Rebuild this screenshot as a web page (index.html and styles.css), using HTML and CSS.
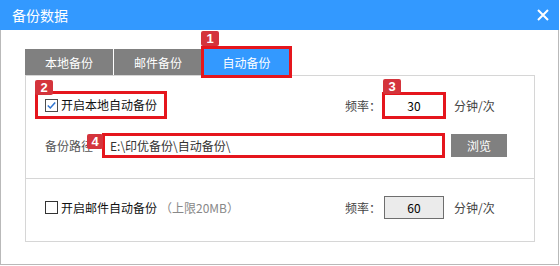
FILE: index.html
```html
<!DOCTYPE html>
<html lang="zh-CN">
<head>
    <meta charset="UTF-8">
    <title>备份数据</title>
    <link rel="stylesheet" href="styles.css">
</head>
<body>
    <div class="window">
        <div class="titlebar">
            <span class="title">备份数据</span>
            <svg class="close" width="12" height="12" viewBox="0 0 12 12">
                <path d="M1 1 L11 11 M11 1 L1 11" stroke="#fff" stroke-width="2"/>
            </svg>
        </div>
        <div class="content">
            <div class="tabs">
                <div class="tab">本地备份</div>
                <div class="tab">邮件备份</div>
                <div class="tab tab-active">自动备份<span class="badge badge-1">1</span></div>
            </div>
            <div class="panel">
                <div class="section section-local">
                    <div class="row row-top">
                        <label class="check mark">
                            <svg width="13" height="13" viewBox="0 0 13 13">
                                <rect x="0.5" y="0.5" width="12" height="12" fill="#fff" stroke="#4d4d4d"/>
                                <path d="M2.8 6.4 L5.3 9 L10.2 3.4" fill="none" stroke="#2f74d0" stroke-width="1.5"/>
                            </svg>
                            开启本地自动备份
                            <span class="badge badge-2">2</span>
                        </label>
                        <div class="freq">
                            <span class="freq-label">频率：</span>
                            <span class="mark mark-freq">
                                <input class="freq-input" type="text" value="30" readonly>
                                <span class="badge badge-3">3</span>
                            </span>
                            <span class="freq-unit">分钟/次</span>
                        </div>
                    </div>
                    <div class="row row-path">
                        <span class="path-label">备份路径</span>
                        <span class="mark mark-path">
                            <input class="path-input" type="text" value="E:\印优备份\自动备份\" readonly>
                            <span class="badge badge-4">4</span>
                        </span>
                        <button class="browse">浏览</button>
                    </div>
                </div>
                <div class="section section-mail">
                    <div class="row row-mail">
                        <label class="check">
                            <svg width="13" height="13" viewBox="0 0 13 13">
                                <rect x="0.5" y="0.5" width="12" height="12" fill="#fff" stroke="#333"/>
                            </svg>
                            开启邮件自动备份<span class="note">（上限20MB）</span>
                        </label>
                        <div class="freq">
                            <span class="freq-label">频率：</span>
                            <input class="freq-input freq-plain" type="text" value="60" readonly>
                            <span class="freq-unit freq-unit-plain">分钟/次</span>
                        </div>
                    </div>
                </div>
            </div>
        </div>
    </div>
</body>
</html>
```

FILE: styles.css
```css
* {
    box-sizing: border-box;
}
body {
    margin: 0;
    background: #fff;
    font-family: "Noto Sans CJK SC", "Noto Sans", sans-serif;
    font-size: 12px;
    color: #333;
}
.window {
    width: 559px;
    height: 265px;
    border: 1px solid #b9b9b9;
    border-top: none;
}
.titlebar {
    height: 30px;
    margin: 0 -1px;
    padding: 0 10px 0 12px;
    background: #3399ff;
    display: flex;
    align-items: center;
    justify-content: space-between;
}
.title {
    color: #fff;
    font-size: 14px;
    line-height: 16px;
}
.content {
    padding: 19px 0 0 24px;
}
.tabs {
    display: flex;
    height: 26px;
}
.tab {
    width: 88px;
    margin-right: 1px;
    background: #808080;
    color: #fff;
    display: flex;
    align-items: center;
    justify-content: center;
}
.tab-active {
    position: relative;
    width: 85px;
    margin-left: 1px;
    background: #3399ff;
    outline: 3px solid #e5161d;
}
.badge {
    position: absolute;
    width: 18px;
    height: 15px;
    background: #d4343c;
    color: #fff;
    border-radius: 2px;
    font-family: "Liberation Sans", sans-serif;
    font-weight: bold;
    font-size: 13px;
    line-height: 15px;
    text-align: center;
    z-index: 2;
}
.badge-1 {
    left: -3px;
    top: -18px;
}
.badge-2 {
    left: -3px;
    top: -14px;
}
.badge-3 {
    left: -2px;
    top: -16px;
}
.badge-4 {
    width: 16px;
    left: -18px;
    top: -2px;
}
.panel {
    width: 510px;
    border: 1px solid #d6d6d6;
}
.section {
    padding: 0 26px 0 9px;
}
.section-local {
    padding-top: 15px;
    padding-bottom: 20px;
    border-bottom: 1px solid #d6d6d6;
}
.section-mail {
    padding-top: 17px;
    padding-bottom: 22px;
}
.row {
    display: flex;
    align-items: center;
}
.row-top {
    height: 28px;
}
.row-path {
    height: 25px;
    margin-top: 14px;
}
.row-mail {
    height: 23px;
}
.check {
    position: relative;
    display: inline-flex;
    align-items: center;
    gap: 3px;
    padding: 3px 7px;
    border: 3px solid transparent;
    line-height: 16px;
    color: #111;
}
.mark {
    border: 3px solid #e5161d;
}
.note {
    color: #888;
}
.freq {
    margin-left: auto;
    display: flex;
    align-items: center;
}
.freq-label {
    width: 37px;
    color: #444;
}
.mark-freq {
    position: relative;
    display: flex;
}
.freq-input {
    width: 58px;
    height: 21px;
    border: none;
    padding: 0;
    background: #fff;
    font: inherit;
    color: #000;
    text-align: center;
    outline: none;
}
.freq-plain {
    width: 60px;
    height: 23px;
    margin-left: 2px;
    border: 1px solid #6e6e6e;
    background: #ebebeb;
}
.freq-unit {
    width: 54px;
    margin-left: 8px;
    color: #444;
}
.freq-unit-plain {
    margin-left: 10px;
}
.path-label {
    padding-left: 10px;
    margin-right: 9px;
    color: #555;
}
.mark-path {
    position: relative;
    display: flex;
    width: 343px;
}
.path-input {
    width: 100%;
    height: 19px;
    border: none;
    padding: 0 0 0 5px;
    font: inherit;
    color: #333;
    outline: none;
}
.browse {
    width: 56px;
    height: 23px;
    margin-left: 6px;
    border: none;
    padding: 0;
    background: #808080;
    color: #fff;
    font: inherit;
}
```
